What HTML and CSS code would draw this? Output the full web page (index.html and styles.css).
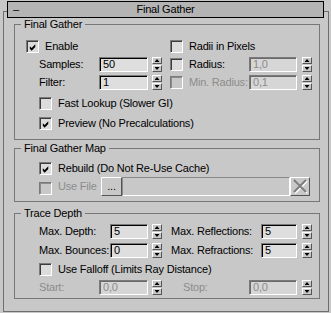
FILE: index.html
```html
<!DOCTYPE html>
<html lang="en">
<head>
    <meta charset="UTF-8">
    <title>Final Gather</title>
    <link rel="stylesheet" href="styles.css">
</head>
<body>
    <div class="rollout">
        <div class="rollout-title">
            <span class="collapse">&ndash;</span>
            <span>Final Gather</span>
            <span></span>
        </div>

        <!-- Final Gather -->
        <div class="group g-final">
            <span class="legend">Final Gather</span>
            <div class="row chk-row">
                <div class="half">
                    <span class="check on"><svg width="11" height="11" viewBox="0 0 11 11"><path d="M2 4 L4 6 L8 2 L8 5 L4 9 L2 7 Z" fill="#000"/></svg></span>
                    <span class="clbl">Enable</span>
                </div>
                <div class="half">
                    <span class="check"></span>
                    <span class="clbl">Radii in Pixels</span>
                </div>
            </div>
            <div class="row mt4">
                <div class="half">
                    <span class="lbl ind13 w60">Samples:</span>
                    <span class="input">50</span>
                    <span class="spin"><i></i><i></i></span>
                </div>
                <div class="half">
                    <span class="check"></span>
                    <span class="lbl ml6 w60">Radius:</span>
                    <span class="input dis w48">1,0</span>
                    <span class="spin ml5"><i></i><i></i></span>
                </div>
            </div>
            <div class="row mt3">
                <div class="half">
                    <span class="lbl ind13 w60">Filter:</span>
                    <span class="input">1</span>
                    <span class="spin"><i></i><i></i></span>
                </div>
                <div class="half">
                    <span class="check dis"></span>
                    <span class="lbl dis ml6 w60">Min. Radius:</span>
                    <span class="input dis w48">0,1</span>
                    <span class="spin ml5"><i></i><i></i></span>
                </div>
            </div>
            <div class="row chk-row mt7">
                <span class="check ind13"></span>
                <span class="clbl">Fast Lookup (Slower GI)</span>
            </div>
            <div class="row chk-row mt7">
                <span class="check on ind13"><svg width="11" height="11" viewBox="0 0 11 11"><path d="M2 4 L4 6 L8 2 L8 5 L4 9 L2 7 Z" fill="#000"/></svg></span>
                <span class="clbl">Preview (No Precalculations)</span>
            </div>
        </div>

        <!-- Final Gather Map -->
        <div class="group g-map">
            <span class="legend">Final Gather Map</span>
            <div class="row chk-row">
                <span class="check on ind13"><svg width="11" height="11" viewBox="0 0 11 11"><path d="M2 4 L4 6 L8 2 L8 5 L4 9 L2 7 Z" fill="#000"/></svg></span>
                <span class="clbl">Rebuild (Do Not Re-Use Cache)</span>
            </div>
            <div class="row file-row mt2">
                <span class="check dis ind13"></span>
                <span class="clbl dis w43">Use File</span>
                <span class="btn btn-dots">...</span>
                <span class="path-field"></span>
                <span class="btn btn-x"><svg width="16" height="15" viewBox="0 0 16 15"><path d="M2 1 L14 13 M14 1 L2 13" stroke="#fff" stroke-width="2" transform="translate(1 1)"/><path d="M2 1 L14 13 M14 1 L2 13" stroke="#7c7c7c" stroke-width="2"/></svg></span>
            </div>
        </div>

        <!-- Trace Depth -->
        <div class="group g-trace">
            <span class="legend">Trace Depth</span>
            <div class="row">
                <div class="half">
                    <span class="lbl ind13 w71">Max. Depth:</span>
                    <span class="input w38">5</span>
                    <span class="spin"><i></i><i></i></span>
                </div>
                <div class="half">
                    <span class="lbl ml1 w90">Max. Reflections:</span>
                    <span class="input w36">5</span>
                    <span class="spin ml5"><i></i><i></i></span>
                </div>
            </div>
            <div class="row mt4">
                <div class="half">
                    <span class="lbl ind13 w71">Max. Bounces:</span>
                    <span class="input w38">0</span>
                    <span class="spin"><i></i><i></i></span>
                </div>
                <div class="half">
                    <span class="lbl ml1 w90">Max. Refractions:</span>
                    <span class="input w36">5</span>
                    <span class="spin ml5"><i></i><i></i></span>
                </div>
            </div>
            <div class="row chk-row mt5">
                <span class="check ind13"></span>
                <span class="clbl">Use Falloff (Limits Ray Distance)</span>
            </div>
            <div class="row mt4">
                <div class="half">
                    <span class="lbl dis ind13 w60">Start:</span>
                    <span class="input dis">0,0</span>
                    <span class="spin"><i></i><i></i></span>
                </div>
                <div class="half">
                    <span class="lbl dis ind13 w66">Stop:</span>
                    <span class="input dis w48">0,0</span>
                    <span class="spin ml5"><i></i><i></i></span>
                </div>
            </div>
        </div>
    </div>
</body>
</html>
```

FILE: styles.css
```css
body {
    margin: 0;
    background: #c8c8c8;
    font-family: "Liberation Sans", Arial, sans-serif;
    font-size: 11px;
    letter-spacing: -0.2px;
    color: #000;
}

.rollout {
    margin: 11px 2px 0 3px;
    height: 301px;
    box-sizing: border-box;
    border: 1px solid #6e6e6e;
}

.rollout-title {
    margin: -11px 4px 0 3px;
    height: 17px;
    box-sizing: border-box;
    border: 1px solid #000;
    background: #b4b4b4;
    display: grid;
    grid-template-columns: 20px 1fr 20px;
    line-height: 15px;
    text-align: center;
}

.collapse {
    text-align: left;
    padding-left: 5px;
}

/* group boxes */
.group {
    position: relative;
    margin-left: 10px;
    width: 306px;
    box-sizing: border-box;
    border: 1px solid #777;
    padding-left: 11px;
}

.g-final {
    margin-top: 6px;
    padding-top: 15px;
    padding-bottom: 9px;
}

.g-map {
    margin-top: 8px;
    padding-top: 13px;
    padding-bottom: 5px;
}

.g-trace {
    margin-top: 11px;
    padding-top: 10px;
    padding-bottom: 3px;
}

.legend {
    position: absolute;
    top: -7px;
    left: 6px;
    padding: 0 3px;
    background: #c8c8c8;
    line-height: 13px;
}

/* rows */
.row {
    display: flex;
    align-items: center;
    height: 15px;
}

.row.chk-row {
    height: 13px;
}

.row.file-row {
    height: 19px;
}

.half {
    flex: none;
    width: 144px;
    display: flex;
    align-items: center;
}

.mt2 { margin-top: 2px; }
.mt3 { margin-top: 3px; }
.mt4 { margin-top: 4px; }
.mt5 { margin-top: 5px; }
.mt7 { margin-top: 7px; }

.ind13 { margin-left: 13px; }
.ml1 { margin-left: 1px; }
.ml5 { margin-left: 5px; }
.ml6 { margin-left: 6px; }

.lbl,
.clbl {
    flex: none;
    white-space: nowrap;
    line-height: 13px;
}

.clbl {
    margin-left: 6px;
}

.w43 { width: 43px; }
.w60 { width: 60px; }
.w66 { width: 66px; }
.w71 { width: 71px; }
.w90 { width: 90px; }

.dis {
    color: #8c8c8c;
}

/* checkbox */
.check {
    flex: none;
    width: 13px;
    height: 13px;
    box-sizing: border-box;
    border: 1px solid;
    border-color: #7a7a7a #fff #fff #7a7a7a;
    box-shadow: inset 1px 1px #3c3c3c;
    background: #dcdcdc;
    display: flex;
    align-items: center;
    justify-content: center;
}

.check svg {
    display: block;
    margin: 1px 0 0 1px;
}

.check.dis {
    background: #c8c8c8;
    box-shadow: inset 1px 1px #8c8c8c;
}

.file-row .check {
    margin-top: 3px;
}

/* numeric field */
.input {
    flex: none;
    width: 49px;
    height: 15px;
    box-sizing: border-box;
    border: 1px solid;
    border-color: #7a7a7a #fff #fff #7a7a7a;
    box-shadow: inset 1px 1px #000;
    background: #dedede;
    padding-left: 3px;
    line-height: 13px;
}

.input.dis {
    box-shadow: inset 1px 1px #6a6a6a;
    background: #d6d6d6;
}

.input.w36 { width: 36px; }
.input.w38 { width: 38px; }
.input.w48 { width: 48px; }

/* spinner */
.spin {
    flex: none;
    width: 10px;
    height: 15px;
    margin-left: 4px;
    display: flex;
    flex-direction: column;
    justify-content: space-between;
}

.spin.ml5 {
    margin-left: 5px;
}

.spin i {
    height: 7px;
    box-sizing: border-box;
    border: 1px solid;
    border-color: #fff #555 #555 #fff;
    display: flex;
    align-items: center;
    justify-content: center;
}

.spin i::after {
    content: "";
    width: 5px;
    height: 3px;
    background: #000;
}

.spin i:first-child::after {
    clip-path: polygon(50% 0, 100% 100%, 0 100%);
}

.spin i:last-child::after {
    clip-path: polygon(0 0, 100% 0, 50% 100%);
}

/* file picker */
.btn {
    flex: none;
    height: 19px;
    box-sizing: border-box;
    border: 1px solid;
    border-color: #fff #555 #555 #fff;
    display: flex;
    align-items: center;
    justify-content: center;
}

.btn-dots {
    width: 21px;
    line-height: 15px;
}

.path-field {
    flex: none;
    width: 168px;
    height: 19px;
    box-sizing: border-box;
    border: 1px solid;
    border-color: #8a8a8a #fff #fff #8a8a8a;
}

.btn-x {
    width: 20px;
}
```
